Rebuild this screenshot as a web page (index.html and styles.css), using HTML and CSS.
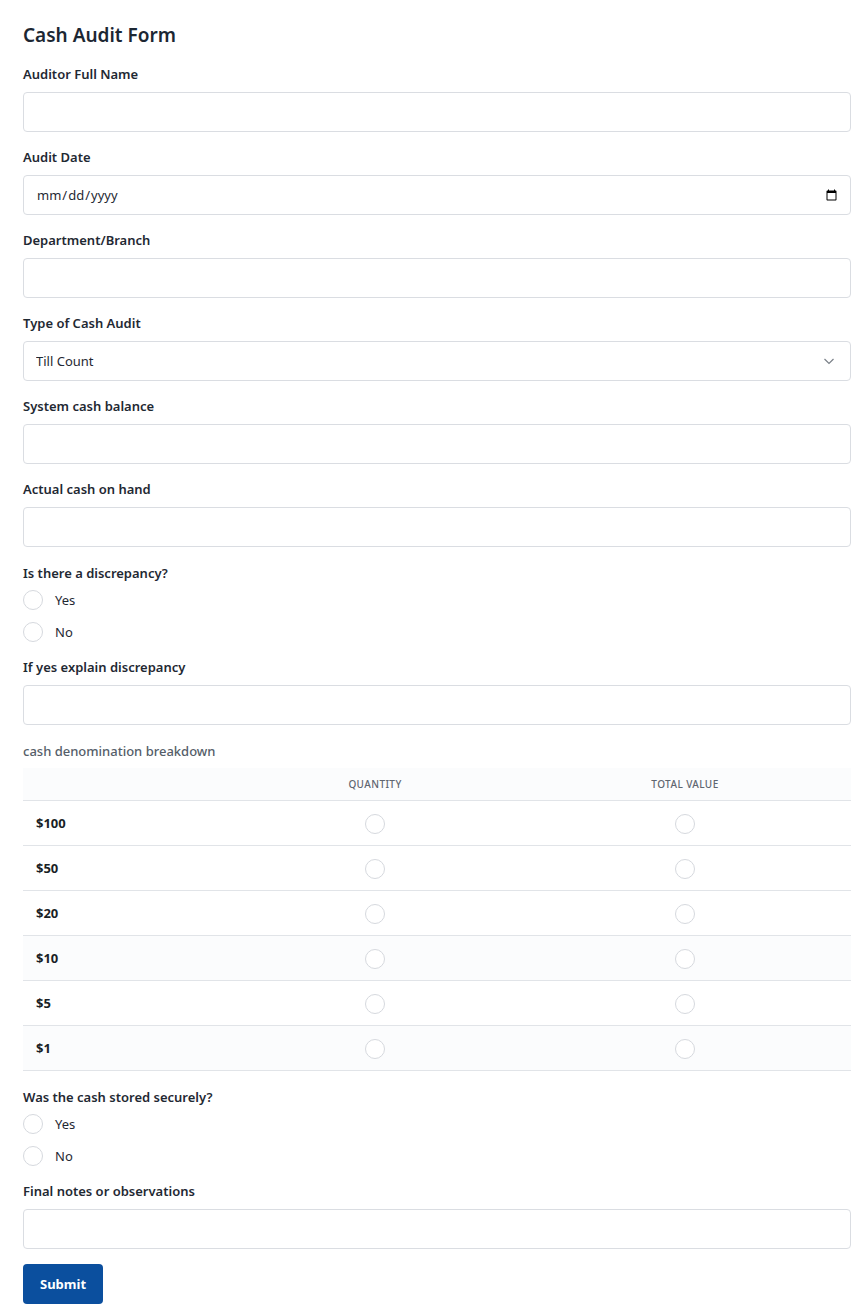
FILE: index.html
```html
<!DOCTYPE html>
<html lang="en">
<head>
    <meta charset="UTF-8">
    <meta name="viewport" content="width=device-width, initial-scale=1.0">
    <title>Cash Audit Form</title>
    <link rel="stylesheet" href="styles.css">
</head>
<body>
    <form class="audit-form">
        <h1 class="form-title">Cash Audit Form</h1>

        <div class="form-group">
            <label class="field-label" for="auditor">Auditor Full Name</label>
            <input class="text-input" type="text" id="auditor">
        </div>

        <div class="form-group">
            <label class="field-label" for="audit-date">Audit Date</label>
            <input class="text-input date-input" type="date" id="audit-date">
        </div>

        <div class="form-group">
            <label class="field-label" for="branch">Department/Branch</label>
            <input class="text-input" type="text" id="branch">
        </div>

        <div class="form-group">
            <label class="field-label" for="audit-type">Type of Cash Audit</label>
            <div class="select-wrap">
                <select class="text-input select-input" id="audit-type">
                    <option>Till Count</option>
                    <option>Safe Count</option>
                    <option>Petty Cash</option>
                </select>
                <svg class="select-arrow" width="12" height="12" viewBox="0 0 12 12">
                    <path d="M1.5 4l4.5 4.5L10.5 4" fill="none" stroke="#7a8088" stroke-width="1.2"/>
                </svg>
            </div>
        </div>

        <div class="form-group">
            <label class="field-label" for="system-balance">System cash balance</label>
            <input class="text-input" type="text" id="system-balance">
        </div>

        <div class="form-group">
            <label class="field-label" for="actual-cash">Actual cash on hand</label>
            <input class="text-input" type="text" id="actual-cash">
        </div>

        <div class="form-group radio-group">
            <span class="field-label">Is there a discrepancy?</span>
            <div class="radio-list">
                <label class="radio-option"><input type="radio" name="discrepancy"> Yes</label>
                <label class="radio-option"><input type="radio" name="discrepancy"> No</label>
            </div>
        </div>

        <div class="form-group">
            <label class="field-label" for="explain">If yes explain discrepancy</label>
            <input class="text-input" type="text" id="explain">
        </div>

        <div class="form-group table-group">
            <span class="field-label muted">cash denomination breakdown</span>
            <table class="denom-table">
                <thead>
                    <tr>
                        <th></th>
                        <th>Quantity</th>
                        <th>Total Value</th>
                    </tr>
                </thead>
                <tbody>
                    <tr><td>$100</td><td><input type="radio" name="q100"></td><td><input type="radio" name="t100"></td></tr>
                    <tr><td>$50</td><td><input type="radio" name="q50"></td><td><input type="radio" name="t50"></td></tr>
                    <tr><td>$20</td><td><input type="radio" name="q20"></td><td><input type="radio" name="t20"></td></tr>
                    <tr class="alt"><td>$10</td><td><input type="radio" name="q10"></td><td><input type="radio" name="t10"></td></tr>
                    <tr><td>$5</td><td><input type="radio" name="q5"></td><td><input type="radio" name="t5"></td></tr>
                    <tr class="alt"><td>$1</td><td><input type="radio" name="q1"></td><td><input type="radio" name="t1"></td></tr>
                </tbody>
            </table>
        </div>

        <div class="form-group radio-group">
            <span class="field-label">Was the cash stored securely?</span>
            <div class="radio-list">
                <label class="radio-option"><input type="radio" name="secure"> Yes</label>
                <label class="radio-option"><input type="radio" name="secure"> No</label>
            </div>
        </div>

        <div class="form-group">
            <label class="field-label" for="notes">Final notes or observations</label>
            <input class="text-input" type="text" id="notes">
        </div>

        <button class="submit-button" type="submit">Submit</button>
    </form>
</body>
</html>
```

FILE: styles.css
```css
* {
    margin: 0;
    padding: 0;
    box-sizing: border-box;
    font-family: "Noto Sans", "Open Sans", Arial, sans-serif;
}

body {
    background-color: #ffffff;
    color: #1f2933;
}

.audit-form {
    width: 828px;
    margin-left: 23px;
    padding-top: 23px;
}

.form-title {
    font-size: 19px;
    font-weight: 600;
    line-height: 24px;
    color: #1c2733;
    margin-bottom: 17px;
}

.form-group {
    margin-bottom: 15px;
}

.radio-group {
    padding-top: 1px;
}

.table-group {
    padding-top: 1px;
}

.field-label {
    display: block;
    font-size: 13px;
    font-weight: 600;
    line-height: 20px;
    color: #1f2933;
    margin-bottom: 8px;
}

.field-label.muted {
    font-weight: 500;
    color: #555e69;
    margin-bottom: 7px;
}

.text-input {
    display: block;
    width: 100%;
    height: 40px;
    border: 1px solid #dadde2;
    border-radius: 4px;
    padding: 0 12px;
    font-size: 13px;
    color: #1f2933;
    background-color: #ffffff;
    outline: none;
}

.date-input::-webkit-calendar-picker-indicator {
    margin-right: -2px;
}

.select-wrap {
    position: relative;
}

.select-input {
    appearance: none;
    -webkit-appearance: none;
}

.select-arrow {
    position: absolute;
    right: 16px;
    top: 14px;
    pointer-events: none;
}

.radio-list {
    display: flex;
    flex-direction: column;
    gap: 8px;
    margin-top: -3px;
    margin-bottom: -2px;
}

.radio-option {
    display: flex;
    align-items: center;
    gap: 12px;
    height: 24px;
    font-size: 13px;
    color: #1f2933;
}

input[type="radio"] {
    appearance: none;
    -webkit-appearance: none;
    width: 20px;
    height: 20px;
    border: 1px solid #d6d9de;
    border-radius: 50%;
    background-color: #ffffff;
    margin: 0;
}

.denom-table {
    width: 100%;
    border-collapse: collapse;
    table-layout: fixed;
}

.denom-table th:nth-child(1) { width: 197px; }
.denom-table th:nth-child(2) { width: 310px; }

.denom-table th:nth-child(3),
.denom-table td:nth-child(3) {
    padding-right: 11px;
}

.denom-table th {
    height: 32px;
    background-color: #fbfcfd;
    font-size: 10px;
    font-weight: 500;
    letter-spacing: 0.4px;
    text-transform: uppercase;
    color: #5f6670;
    border-bottom: 1px solid #e1e4e8;
    text-align: center;
}

.denom-table td {
    height: 45px;
    border-bottom: 1px solid #e1e4e8;
    text-align: center;
    vertical-align: middle;
}

.denom-table td:first-child {
    text-align: left;
    padding-left: 13px;
    font-size: 13px;
    font-weight: 700;
    color: #1a1f26;
}

.denom-table td input {
    display: inline-block;
    vertical-align: middle;
}

.denom-table tr.alt td {
    background-color: #fbfcfd;
}

.submit-button {
    background-color: #0b4f9e;
    color: white;
    border: none;
    border-radius: 4px;
    height: 40px;
    padding: 0 17px;
    font-size: 13px;
    font-weight: 700;
    cursor: pointer;
}
```
